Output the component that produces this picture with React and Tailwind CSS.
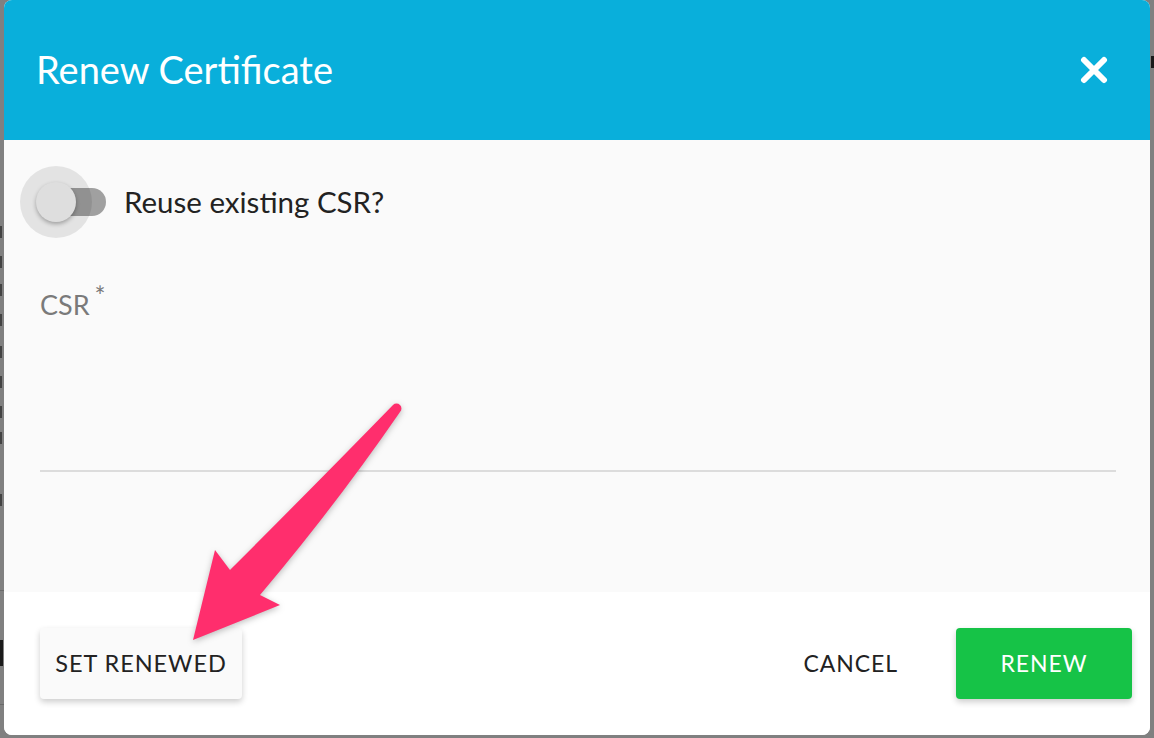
import { useState } from "react";

const font = { fontFamily: "Lato, 'Open Sans', sans-serif" };

function Switch({ on }) {
  return (
    <div className="relative w-[86px] h-[72px] shrink-0">
      <div className="absolute left-[18px] top-[22px] w-[68px] h-[28px] rounded-full bg-black/[0.36]" />
      <div className="absolute left-0 top-0 w-[72px] h-[72px] rounded-full bg-black/[0.09]" />
      <div
        className={
          "absolute top-[16px] w-[40px] h-[40px] rounded-full bg-[#dedede] shadow-[0_2px_4px_rgba(0,0,0,0.3)] " +
          (on ? "left-[46px]" : "left-[16px]")
        }
      />
    </div>
  );
}

function Arrow() {
  return (
    <svg
      className="absolute left-0 top-0 pointer-events-none drop-shadow-[0_2px_3px_rgba(0,0,0,0.25)]"
      width="1154"
      height="738"
      viewBox="0 0 1154 738"
    >
      <path
        d="M393 405 Q322 478 230 570 L215 550 L193 640 L280 605 L260 595 Q336 505 400 412 A4.6 4.6 0 0 0 393 405 Z"
        fill="#ff2e6d"
      />
    </svg>
  );
}

// bits of the page behind the modal that peek out at the edge
const edgeMarks = [226, 256, 284, 314, 346, 376, 406, 432, 494];

export default function App() {
  const [reuse] = useState(false);

  return (
    <div className="relative w-[1154px] h-[738px] overflow-hidden bg-[#808080]" style={font}>
      <div className="absolute left-0 top-0 w-[4px] h-full">
        {edgeMarks.map((y) => (
          <div key={y} className="absolute left-0 w-[2px] h-[12px] bg-[#2a2a2a]/70" style={{ top: y }} />
        ))}
        <div className="absolute left-0 top-[590px] w-[4px] h-[1px] bg-[#6a6a6a]" />
        <div className="absolute left-0 top-[640px] w-[3px] h-[26px] bg-[#1a1a1a]" />
        <div className="absolute left-0 top-[704px] w-[4px] h-[1px] bg-[#6a6a6a]" />
      </div>
      <div className="absolute right-0 top-[56px] w-[3px] h-[12px] bg-[#1a1a1a]" />

      <div className="relative ml-[4px] w-[1146px] h-[735px] rounded-[8px] overflow-hidden bg-white flex flex-col">
        <header className="h-[140px] shrink-0 bg-[#09afdb] flex items-center justify-between pl-[32px] pr-[42px]">
          <h1 className="text-white text-[38px] leading-none pb-[3px]">Renew Certificate</h1>
          <button className="w-[28px] h-[28px] flex items-center justify-center">
            <svg width="28" height="28" viewBox="0 0 28 28">
              <path d="M4 4 L24 24 M24 4 L4 24" stroke="#fff" strokeWidth="6" strokeLinecap="round" />
            </svg>
          </button>
        </header>

        <section className="h-[452px] shrink-0 bg-[#fafafa] pt-[26px] px-[36px] pr-[34px]">
          <div className="flex items-center -ml-[20px]">
            <Switch on={reuse} />
            <span className="ml-[18px] text-[29.5px] text-[#222]">Reuse existing CSR?</span>
          </div>
          <div className="mt-[47px] pt-[4px] h-[187px] border-b-2 border-[#dcdcdc]">
            <label className="text-[27px] text-[#7a7a7a] leading-[32px]">
              CSR<sup className="ml-[5px] text-[26px] top-[-0.35em] text-[#7a7a7a]">*</sup>
            </label>
          </div>
        </section>

        <footer className="flex-1 bg-white flex items-start justify-between pt-[36px] pl-[36px] pr-[18px]">
          <button className="h-[71px] w-[202px] rounded-[4px] bg-[#fafafa] shadow-[0_3px_6px_rgba(0,0,0,0.2)] text-[23.5px] tracking-[0.04em] text-[#222]">
            SET RENEWED
          </button>
          <div className="flex items-center gap-[34px]">
            <button className="h-[71px] px-[24px] text-[23px] tracking-[0.04em] text-[#222]">CANCEL</button>
            <button className="h-[71px] w-[176px] rounded-[4px] bg-[#16c347] shadow-[0_3px_6px_rgba(0,0,0,0.2)] text-[23px] tracking-[0.04em] text-white">
              RENEW
            </button>
          </div>
        </footer>
      </div>

      <Arrow />
    </div>
  );
}
